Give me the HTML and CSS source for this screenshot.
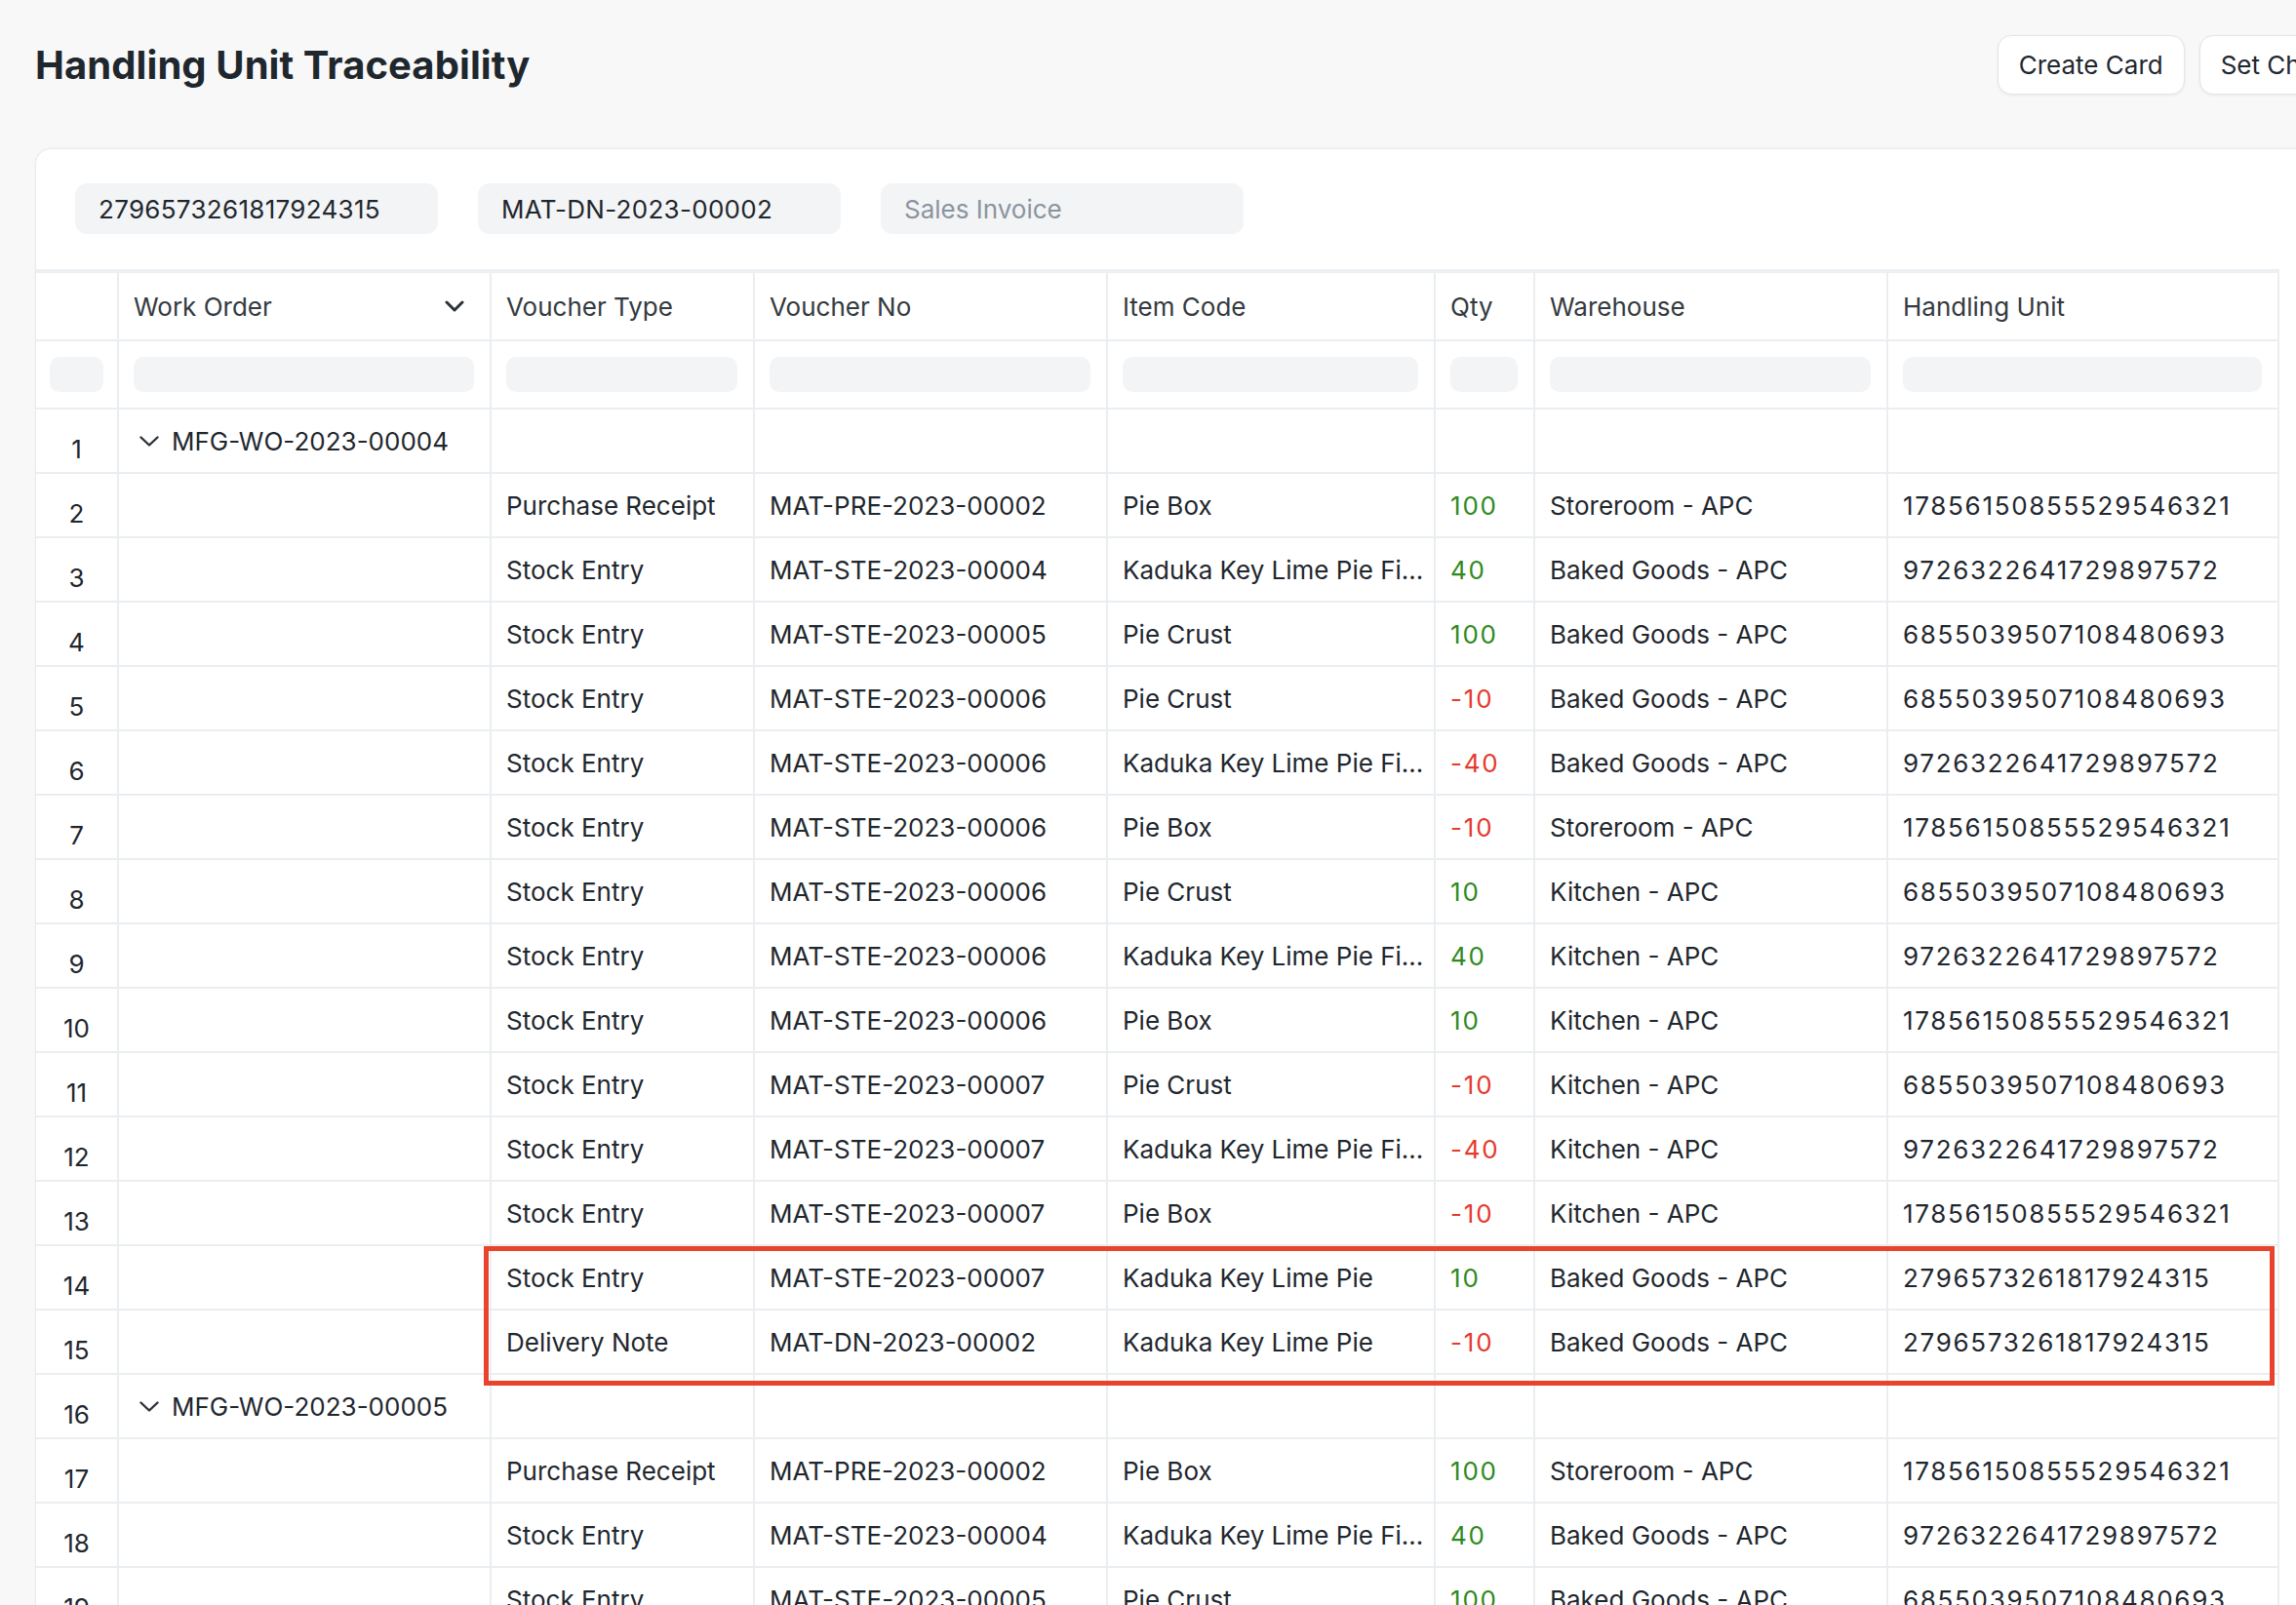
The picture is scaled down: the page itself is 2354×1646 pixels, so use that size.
FILE: index.html
```html
<!DOCTYPE html>
<html lang="en">
<head>
<meta charset="utf-8">
<title>Handling Unit Traceability</title>
<link rel="stylesheet" href="styles.css">
</head>
<body>
<div class="page">
  <header class="page-head">
    <h1 class="title">Handling Unit Traceability</h1>
    <div class="actions">
      <button class="btn">Create Card</button>
      <button class="btn">Set Chart</button>
    </div>
  </header>

  <section class="card">
    <div class="filters">
      <div class="field">2796573261817924315</div>
      <div class="field">MAT-DN-2023-00002</div>
      <div class="field placeholder">Sales Invoice</div>
    </div>

    <div class="dt">
      <div class="row head">
        <div class="cell num"></div>
        <div class="cell wo-head"><span>Work Order</span>
          <svg class="head-caret" width="20" height="12" viewBox="0 0 20 12"><path d="M2 2 L10 10 L18 2" fill="none" stroke="#2b3137" stroke-width="3" stroke-linecap="round" stroke-linejoin="round"/></svg>
        </div>
        <div class="cell">Voucher Type</div>
        <div class="cell">Voucher No</div>
        <div class="cell">Item Code</div>
        <div class="cell">Qty</div>
        <div class="cell">Warehouse</div>
        <div class="cell">Handling Unit</div>
      </div>
      <div class="row filter-row">
        <div class="cell num"><span class="finput"></span></div>
        <div class="cell"><span class="finput"></span></div>
        <div class="cell"><span class="finput"></span></div>
        <div class="cell"><span class="finput"></span></div>
        <div class="cell"><span class="finput"></span></div>
        <div class="cell"><span class="finput"></span></div>
        <div class="cell"><span class="finput"></span></div>
        <div class="cell"><span class="finput"></span></div>
      </div>

      <div class="row"><div class="cell num">1</div><div class="cell group"><svg class="caret" width="20" height="11" viewBox="0 0 20 11"><path d="M1.5 1.5 L10 9.5 L18.5 1.5" fill="none" stroke="#2b3137" stroke-width="2.4" stroke-linecap="round" stroke-linejoin="round"/></svg>MFG-WO-2023-00004</div><div class="cell"></div><div class="cell"></div><div class="cell"></div><div class="cell"></div><div class="cell"></div><div class="cell"></div></div>
      <div class="row"><div class="cell num">2</div><div class="cell"></div><div class="cell">Purchase Receipt</div><div class="cell">MAT-PRE-2023-00002</div><div class="cell">Pie Box</div><div class="cell qty pos">100</div><div class="cell">Storeroom - APC</div><div class="cell hu">17856150855529546321</div></div>
      <div class="row"><div class="cell num">3</div><div class="cell"></div><div class="cell">Stock Entry</div><div class="cell">MAT-STE-2023-00004</div><div class="cell">Kaduka Key Lime Pie Fi...</div><div class="cell qty pos">40</div><div class="cell">Baked Goods - APC</div><div class="cell hu">9726322641729897572</div></div>
      <div class="row"><div class="cell num">4</div><div class="cell"></div><div class="cell">Stock Entry</div><div class="cell">MAT-STE-2023-00005</div><div class="cell">Pie Crust</div><div class="cell qty pos">100</div><div class="cell">Baked Goods - APC</div><div class="cell hu">6855039507108480693</div></div>
      <div class="row"><div class="cell num">5</div><div class="cell"></div><div class="cell">Stock Entry</div><div class="cell">MAT-STE-2023-00006</div><div class="cell">Pie Crust</div><div class="cell qty neg">-10</div><div class="cell">Baked Goods - APC</div><div class="cell hu">6855039507108480693</div></div>
      <div class="row"><div class="cell num">6</div><div class="cell"></div><div class="cell">Stock Entry</div><div class="cell">MAT-STE-2023-00006</div><div class="cell">Kaduka Key Lime Pie Fi...</div><div class="cell qty neg">-40</div><div class="cell">Baked Goods - APC</div><div class="cell hu">9726322641729897572</div></div>
      <div class="row"><div class="cell num">7</div><div class="cell"></div><div class="cell">Stock Entry</div><div class="cell">MAT-STE-2023-00006</div><div class="cell">Pie Box</div><div class="cell qty neg">-10</div><div class="cell">Storeroom - APC</div><div class="cell hu">17856150855529546321</div></div>
      <div class="row"><div class="cell num">8</div><div class="cell"></div><div class="cell">Stock Entry</div><div class="cell">MAT-STE-2023-00006</div><div class="cell">Pie Crust</div><div class="cell qty pos">10</div><div class="cell">Kitchen - APC</div><div class="cell hu">6855039507108480693</div></div>
      <div class="row"><div class="cell num">9</div><div class="cell"></div><div class="cell">Stock Entry</div><div class="cell">MAT-STE-2023-00006</div><div class="cell">Kaduka Key Lime Pie Fi...</div><div class="cell qty pos">40</div><div class="cell">Kitchen - APC</div><div class="cell hu">9726322641729897572</div></div>
      <div class="row"><div class="cell num">10</div><div class="cell"></div><div class="cell">Stock Entry</div><div class="cell">MAT-STE-2023-00006</div><div class="cell">Pie Box</div><div class="cell qty pos">10</div><div class="cell">Kitchen - APC</div><div class="cell hu">17856150855529546321</div></div>
      <div class="row"><div class="cell num">11</div><div class="cell"></div><div class="cell">Stock Entry</div><div class="cell">MAT-STE-2023-00007</div><div class="cell">Pie Crust</div><div class="cell qty neg">-10</div><div class="cell">Kitchen - APC</div><div class="cell hu">6855039507108480693</div></div>
      <div class="row"><div class="cell num">12</div><div class="cell"></div><div class="cell">Stock Entry</div><div class="cell">MAT-STE-2023-00007</div><div class="cell">Kaduka Key Lime Pie Fi...</div><div class="cell qty neg">-40</div><div class="cell">Kitchen - APC</div><div class="cell hu">9726322641729897572</div></div>
      <div class="row"><div class="cell num">13</div><div class="cell"></div><div class="cell">Stock Entry</div><div class="cell">MAT-STE-2023-00007</div><div class="cell">Pie Box</div><div class="cell qty neg">-10</div><div class="cell">Kitchen - APC</div><div class="cell hu">17856150855529546321</div></div>
      <div class="row"><div class="cell num">14</div><div class="cell"></div><div class="cell">Stock Entry</div><div class="cell">MAT-STE-2023-00007</div><div class="cell">Kaduka Key Lime Pie</div><div class="cell qty pos">10</div><div class="cell">Baked Goods - APC</div><div class="cell hu">2796573261817924315</div></div>
      <div class="row"><div class="cell num">15</div><div class="cell"></div><div class="cell">Delivery Note</div><div class="cell">MAT-DN-2023-00002</div><div class="cell">Kaduka Key Lime Pie</div><div class="cell qty neg">-10</div><div class="cell">Baked Goods - APC</div><div class="cell hu">2796573261817924315</div></div>
      <div class="row"><div class="cell num">16</div><div class="cell group"><svg class="caret" width="20" height="11" viewBox="0 0 20 11"><path d="M1.5 1.5 L10 9.5 L18.5 1.5" fill="none" stroke="#2b3137" stroke-width="2.4" stroke-linecap="round" stroke-linejoin="round"/></svg>MFG-WO-2023-00005</div><div class="cell"></div><div class="cell"></div><div class="cell"></div><div class="cell"></div><div class="cell"></div><div class="cell"></div></div>
      <div class="row"><div class="cell num">17</div><div class="cell"></div><div class="cell">Purchase Receipt</div><div class="cell">MAT-PRE-2023-00002</div><div class="cell">Pie Box</div><div class="cell qty pos">100</div><div class="cell">Storeroom - APC</div><div class="cell hu">17856150855529546321</div></div>
      <div class="row"><div class="cell num">18</div><div class="cell"></div><div class="cell">Stock Entry</div><div class="cell">MAT-STE-2023-00004</div><div class="cell">Kaduka Key Lime Pie Fi...</div><div class="cell qty pos">40</div><div class="cell">Baked Goods - APC</div><div class="cell hu">9726322641729897572</div></div>
      <div class="row"><div class="cell num">19</div><div class="cell"></div><div class="cell">Stock Entry</div><div class="cell">MAT-STE-2023-00005</div><div class="cell">Pie Crust</div><div class="cell qty pos">100</div><div class="cell">Baked Goods - APC</div><div class="cell hu">6855039507108480693</div></div>
    </div>
  </section>

  <div class="highlight"></div>
</div>
</body>
</html>
```

FILE: styles.css
```css
* { box-sizing: border-box; }

html, body {
  margin: 0;
  padding: 0;
  background: #f8f8f8;
  overflow: hidden;
}

body {
  font-family: Inter, "Noto Sans", "Liberation Sans", sans-serif;
  font-size: 26px;
  color: #1f272e;
}

.page {
  position: relative;
  width: 2450px;
  height: 1646px;
  overflow: hidden;
}

.page-head {
  display: flex;
  align-items: center;
  height: 133px;
  padding: 0 36px 0 36px;
}

.title {
  margin: 0;
  font-size: 40px;
  font-weight: 700;
  color: #1f272e;
  letter-spacing: 0.002em;
}

.actions {
  margin-left: auto;
  display: flex;
  gap: 15px;
}

.btn {
  font-family: inherit;
  font-size: 26px;
  color: #1f272e;
  background: #ffffff;
  border: 1px solid #e2e4e7;
  border-radius: 14px;
  height: 61px;
  padding: 0 21px;
  box-shadow: 0 1px 3px rgba(0, 0, 0, 0.06);
}

.card {
  margin: 19px 36px 0 36px;
  background: #ffffff;
  border: 1px solid #e9ebee;
  border-radius: 16px;
  box-shadow: 0 0 3px rgba(0, 0, 0, 0.04);
  height: 1600px;
  overflow: hidden;
}

.filters {
  display: flex;
  gap: 41px;
  padding: 35px 40px 36px;
}

.field {
  width: 372px;
  height: 52px;
  border-radius: 12px;
  background: #f3f4f6;
  padding: 0 24px;
  display: flex;
  align-items: center;
  letter-spacing: 0.3px;
}

.field.placeholder {
  color: #8a949e;
  letter-spacing: 0;
}

.dt {
  width: 2300px;
  border-top: 4px solid #edf0f2;
}

.row {
  display: grid;
  grid-template-columns: 85px 382px 270px 362px 336px 102px 362px 401px;
}

.cell {
  height: 66px;
  border-right: 2px solid #ebeef0;
  border-bottom: 2px solid #ebeef0;
  padding: 0 15px;
  display: flex;
  align-items: center;
  white-space: nowrap;
  overflow: hidden;
}

.head .cell,
.filter-row .cell {
  height: 70px;
}

.head .cell {
  color: #343a40;
}

.wo-head {
  justify-content: space-between;
  padding-right: 26px;
}

.head-caret {
  display: block;
}

.filter-row .cell {
  padding: 0 16px 0 15px;
}

.finput {
  display: block;
  width: 100%;
  height: 36px;
  border-radius: 10px;
  background: #f3f4f6;
}

.cell.num {
  justify-content: center;
  padding: 16px 0 0 0;
}

.filter-row .cell.num {
  padding: 0 14px;
}

.head .cell.num {
  padding: 0;
}

.group {
  padding-left: 21px;
}

.caret {
  display: block;
  margin-right: 13px;
}

.hu {
  letter-spacing: 1.7px;
}

.qty {
  letter-spacing: 1.8px;
}

.pos { color: #2f8a22; }
.neg { color: #e53a2e; }

.highlight {
  position: absolute;
  left: 496px;
  top: 1278px;
  width: 1836px;
  height: 143px;
  border: 5px solid #e8432d;
}
```
